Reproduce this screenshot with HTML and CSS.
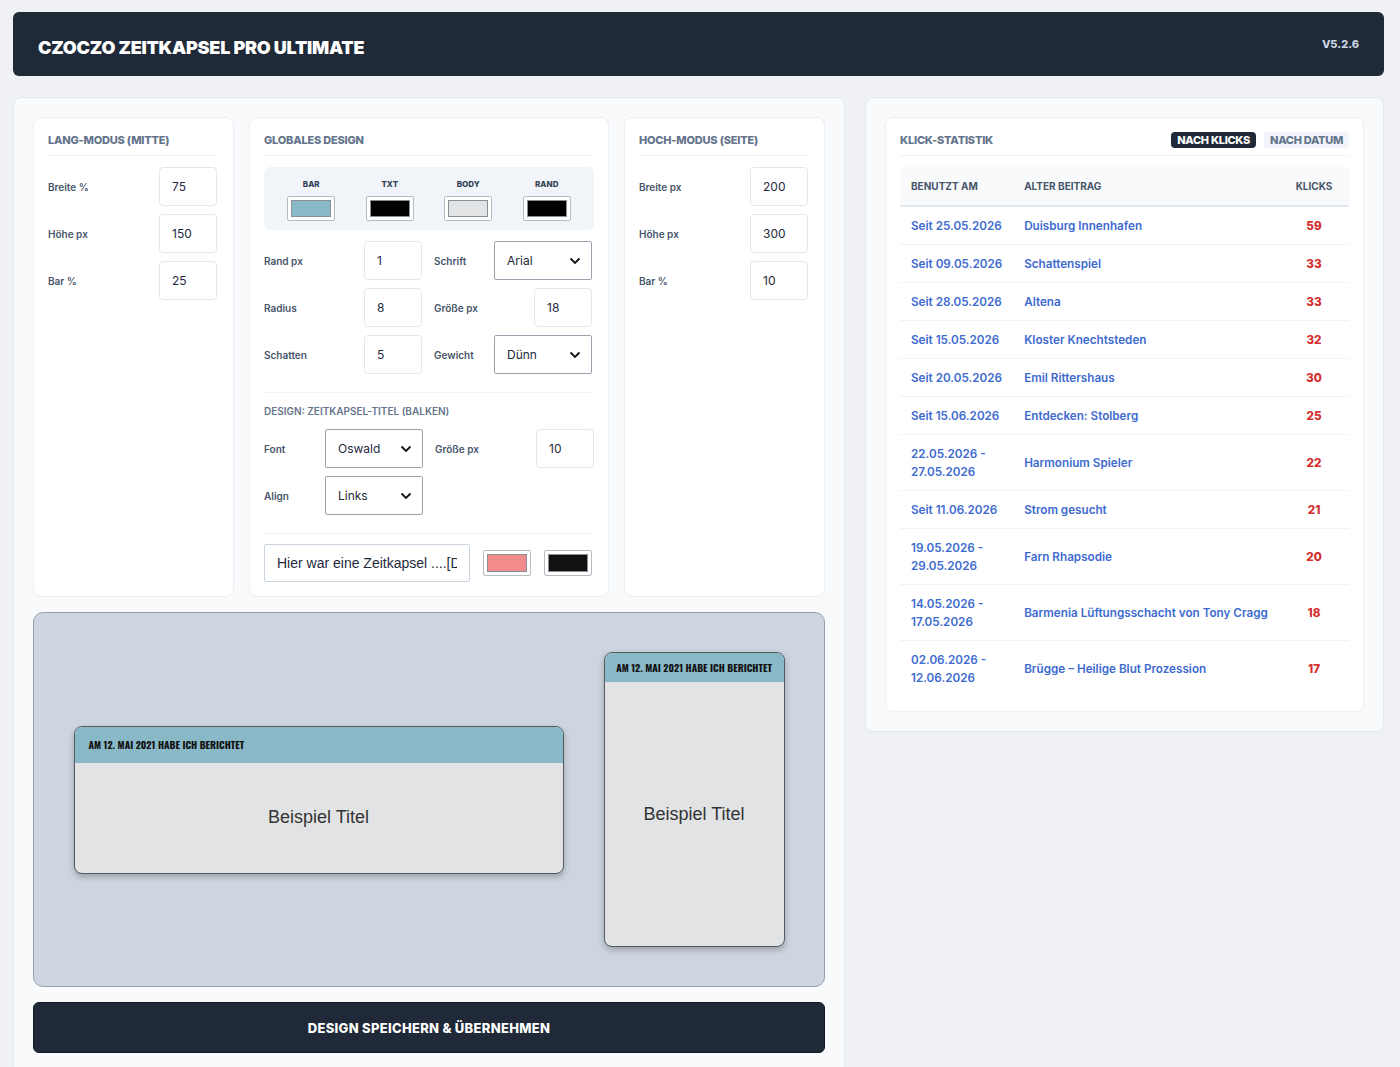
FILE: index.html
```html
<!DOCTYPE html>
<html lang="de">
<head>
<meta charset="UTF-8">
<title>Czoczo Zeitkapsel Pro Ultimate</title>
<link rel="stylesheet" href="styles.css">
</head>
<body>
<div class="page">
	<header class="topbar">
		<h1>CZOCZO ZEITKAPSEL PRO ULTIMATE</h1>
		<span class="version">V5.2.6</span>
	</header>

	<div class="main">
		<section class="panel left">
			<div class="cards">
				<div class="card small">
					<h2>LANG-MODUS (MITTE)</h2>
					<div class="row"><label>Breite %</label><input class="num" value="75"></div>
					<div class="row"><label>Höhe px</label><input class="num" value="150"></div>
					<div class="row"><label>Bar %</label><input class="num" value="25"></div>
				</div>

				<div class="card wide">
					<h2>GLOBALES DESIGN</h2>
					<div class="colors">
						<div class="color"><span>BAR</span><div class="swatch"><i class="c-bar"></i></div></div>
						<div class="color"><span>TXT</span><div class="swatch"><i class="c-black"></i></div></div>
						<div class="color"><span>BODY</span><div class="swatch"><i class="c-body"></i></div></div>
						<div class="color"><span>RAND</span><div class="swatch"><i class="c-black"></i></div></div>
					</div>
					<div class="grid g1">
						<label>Rand px</label><input class="num" value="1">
						<label class="l2">Schrift</label>
						<div class="select"><span>Arial</span><svg width="12" height="8" viewBox="0 0 12 8"><path d="M1.5 1.5 6 6l4.5-4.5" fill="none" stroke="#111" stroke-width="1.8"/></svg></div>
						<label>Radius</label><input class="num" value="8">
						<label class="l2">Größe px</label><input class="num right" value="18">
						<label>Schatten</label><input class="num" value="5">
						<label class="l2">Gewicht</label>
						<div class="select"><span>Dünn</span><svg width="12" height="8" viewBox="0 0 12 8"><path d="M1.5 1.5 6 6l4.5-4.5" fill="none" stroke="#111" stroke-width="1.8"/></svg></div>
					</div>
					<div class="sub">DESIGN: ZEITKAPSEL-TITEL (BALKEN)</div>
					<div class="grid g2">
						<label>Font</label>
						<div class="select"><span>Oswald</span><svg width="12" height="8" viewBox="0 0 12 8"><path d="M1.5 1.5 6 6l4.5-4.5" fill="none" stroke="#111" stroke-width="1.8"/></svg></div>
						<label class="l2">Größe px</label><input class="num right" value="10">
						<label>Align</label>
						<div class="select"><span>Links</span><svg width="12" height="8" viewBox="0 0 12 8"><path d="M1.5 1.5 6 6l4.5-4.5" fill="none" stroke="#111" stroke-width="1.8"/></svg></div>
					</div>
					<div class="capsule">
						<input class="text" value="Hier war eine Zeitkapsel ....[Datum]">
						<div class="swatch big"><i class="c-pink"></i></div>
						<div class="swatch big"><i class="c-dark"></i></div>
					</div>
				</div>

				<div class="card small">
					<h2>HOCH-MODUS (SEITE)</h2>
					<div class="row"><label>Breite px</label><input class="num" value="200"></div>
					<div class="row"><label>Höhe px</label><input class="num" value="300"></div>
					<div class="row"><label>Bar %</label><input class="num" value="10"></div>
				</div>
			</div>

			<div class="preview">
				<div class="capsule-box long">
					<div class="bar">AM 12. MAI 2021 HABE ICH BERICHTET</div>
					<div class="body">Beispiel Titel</div>
				</div>
				<div class="capsule-box tall">
					<div class="bar">AM 12. MAI 2021 HABE ICH BERICHTET</div>
					<div class="body">Beispiel Titel</div>
				</div>
			</div>

			<button class="save">DESIGN SPEICHERN &amp; ÜBERNEHMEN</button>
		</section>

		<section class="panel right">
			<div class="card stats">
				<div class="stats-head">
					<h2>KLICK-STATISTIK</h2>
					<div class="tabs">
						<span class="tab active">NACH KLICKS</span>
						<span class="tab">NACH DATUM</span>
					</div>
				</div>
				<table>
					<thead>
						<tr><th class="d">BENUTZT AM</th><th>ALTER BEITRAG</th><th class="k">KLICKS</th></tr>
					</thead>
					<tbody>
						<tr><td class="d">Seit 25.05.2026</td><td>Duisburg Innenhafen</td><td class="k">59</td></tr>
						<tr><td class="d">Seit 09.05.2026</td><td>Schattenspiel</td><td class="k">33</td></tr>
						<tr><td class="d">Seit 28.05.2026</td><td>Altena</td><td class="k">33</td></tr>
						<tr><td class="d">Seit 15.05.2026</td><td>Kloster Knechtsteden</td><td class="k">32</td></tr>
						<tr><td class="d">Seit 20.05.2026</td><td>Emil Rittershaus</td><td class="k">30</td></tr>
						<tr><td class="d">Seit 15.06.2026</td><td>Entdecken: Stolberg</td><td class="k">25</td></tr>
						<tr><td class="d">22.05.2026 -<br>27.05.2026</td><td>Harmonium Spieler</td><td class="k">22</td></tr>
						<tr><td class="d">Seit 11.06.2026</td><td>Strom gesucht</td><td class="k">21</td></tr>
						<tr><td class="d">19.05.2026 -<br>29.05.2026</td><td>Farn Rhapsodie</td><td class="k">20</td></tr>
						<tr><td class="d">14.05.2026 -<br>17.05.2026</td><td>Barmenia Lüftungsschacht von Tony Cragg</td><td class="k">18</td></tr>
						<tr><td class="d">02.06.2026 -<br>12.06.2026</td><td>Brügge – Heilige Blut Prozession</td><td class="k">17</td></tr>
					</tbody>
				</table>
			</div>
		</section>
	</div>
</div>
</body>
</html>
```

FILE: styles.css
```css
* {
	box-sizing: border-box;
}
body {
	margin: 0;
	background: #eff1f5;
	font-family: Inter, "Liberation Sans", sans-serif;
	color: #1e293b;
}
.page {
	padding: 12px 16px 0 13px;
}
.topbar {
	height: 64px;
	background: #1f2937;
	border-radius: 6px;
	display: flex;
	align-items: center;
	justify-content: space-between;
	padding: 0 25px;
}
.topbar h1 {
	margin: 0;
	padding-top: 6px;
	color: #fff;
	font-size: 18px;
	font-weight: 900;
	letter-spacing: -0.25px;
}
.version {
	color: #cbd5e1;
	font-size: 11px;
	font-weight: 800;
}
.main {
	display: flex;
	align-items: flex-start;
	gap: 20px;
	margin-top: 21px;
}
.panel {
	background: #f8fafc;
	border: 1px solid #e2e8f0;
	border-radius: 8px;
	padding: 19px;
}
.panel.left {
	width: 832px;
	padding-bottom: 30px;
}
.panel.right {
	flex: 1;
}
.cards {
	display: flex;
	gap: 15px;
	align-items: stretch;
}
.card {
	background: #fff;
	border: 1px solid #eceff3;
	border-radius: 8px;
	padding: 13px 16px 14px 14px;
}
.card.small {
	width: 201px;
}
.card.wide {
	width: 360px;
	padding-right: 14px;
}
.card h2 {
	margin: 0 0 11px;
	padding: 2px 0 8px;
	border-bottom: 1px solid #f1f4f7;
	font-size: 11px;
	font-weight: 800;
	color: #64748b;
	letter-spacing: -0.2px;
}
.row {
	display: flex;
	align-items: center;
	justify-content: space-between;
	margin-bottom: 8px;
}
label {
	font-size: 10px;
	font-weight: 600;
	color: #475569;
}
input {
	font-family: inherit;
	color: #1e293b;
	outline: none;
}
.num {
	width: 58px;
	height: 39px;
	border: 1px solid #e2e8f0;
	border-radius: 4px;
	padding: 0 12px;
	font-size: 12px;
}
.num.right {
	justify-self: end;
}
.colors {
	display: grid;
	grid-template-columns: repeat(4, 1fr);
	background: #f1f5f9;
	border-radius: 6px;
	padding: 12px 8px 9px;
	margin-bottom: 11px;
}
.color {
	display: flex;
	flex-direction: column;
	align-items: center;
	gap: 7px;
}
.color span {
	font-size: 8px;
	font-weight: 800;
	color: #334155;
}
.swatch {
	width: 48px;
	height: 25px;
	background: #fff;
	border: 1px solid #b8bcc2;
	border-radius: 2px;
	padding: 3px;
}
.swatch i {
	display: block;
	height: 100%;
	border: 1px solid #8a8f96;
}
.c-bar { background: #89b8c6; }
.c-black { background: #000; }
.c-body { background: #e2e3e5; }
.c-pink { background: #f28b8b; }
.c-dark { background: #111; }
.grid {
	display: grid;
	row-gap: 8px;
	align-items: center;
}
.g1 {
	grid-template-columns: 100px 58px 72px 98px;
	padding-bottom: 18px;
	border-bottom: 1px solid #eef1f5;
}
.g2 {
	grid-template-columns: 61px 98px 1fr 58px;
	padding-bottom: 18px;
	border-bottom: 1px solid #eef1f5;
}
.l2 {
	padding-left: 12px;
}
.select {
	height: 39px;
	border: 1px solid #9ca3af;
	border-radius: 2px;
	display: flex;
	align-items: center;
	justify-content: space-between;
	padding: 0 10px 0 12px;
	font-size: 12px;
	color: #1e293b;
}
.sub {
	font-size: 10px;
	font-weight: 600;
	color: #64748b;
	margin: 12px 0 12px;
}
.capsule {
	display: flex;
	align-items: center;
	gap: 13px;
	margin-top: 10px;
}
.text {
	width: 206px;
	height: 38px;
	border: 1px solid #cbd5e1;
	border-radius: 2px;
	padding: 0 12px;
	font-size: 14px;
	font-family: "Liberation Sans", Arial, sans-serif;
}
.swatch.big {
	width: 48px;
	height: 26px;
}
.preview {
	margin-top: 15px;
	height: 375px;
	background: #cdd5e0;
	border: 1px solid #97a1ae;
	border-radius: 10px;
	display: flex;
	align-items: center;
	justify-content: center;
	gap: 40px;
}
.capsule-box {
	background: #e2e3e5;
	border: 1px solid #555b63;
	border-radius: 8px;
	box-shadow: 0 3px 6px rgba(0, 0, 0, 0.25);
	overflow: hidden;
	display: flex;
	flex-direction: column;
}
.capsule-box.long {
	width: 490px;
	height: 148px;
}
.capsule-box.tall {
	width: 181px;
	height: 295px;
}
.bar {
	background: #89b8c6;
	font-family: Oswald, "Liberation Sans Narrow", "DejaVu Sans Condensed", sans-serif;
	font-stretch: condensed;
	font-size: 10px;
	font-weight: 700;
	color: #111;
	display: flex;
	align-items: center;
	white-space: nowrap;
}
.long .bar {
	height: 36px;
	padding-left: 14px;
}
.tall .bar {
	height: 29px;
	justify-content: center;
}
.body {
	flex: 1;
	display: flex;
	align-items: center;
	justify-content: center;
	font-family: "Liberation Sans", Arial, sans-serif;
	font-size: 18px;
	color: #333;
}
.save {
	display: block;
	width: 100%;
	height: 51px;
	margin-top: 15px;
	background: #1f2937;
	border: 1px solid #111827;
	border-radius: 6px;
	color: #fff;
	font-family: inherit;
	font-size: 13px;
	font-weight: 800;
	letter-spacing: 0.3px;
	padding-top: 2px;
}
.stats {
	padding: 13px 14px 15px;
}
.stats-head {
	display: flex;
	justify-content: space-between;
	align-items: flex-start;
	border-bottom: 1px solid #f1f4f7;
	margin-bottom: 11px;
}
.stats-head h2 {
	border: none;
	margin: 0;
}
.tabs {
	display: flex;
	gap: 8px;
	margin-top: 1px;
}
.tab {
	font-size: 11px;
	font-weight: 800;
	letter-spacing: -0.3px;
	padding: 1px 6px;
	border-radius: 4px;
	background: #f1f5f9;
	color: #64748b;
}
.tab.active {
	background: #1f2937;
	color: #fff;
}
table {
	width: 100%;
	border-collapse: collapse;
}
th {
	background: #f8fafc;
	text-align: left;
	font-size: 10px;
	font-weight: 700;
	color: #475569;
	padding: 10px 11px;
	line-height: 18px;
	border-bottom: 2px solid #e2e8f0;
}
td {
	font-size: 11.7px;
	font-weight: 600;
	color: #3d6bd0;
	padding: 9.5px 11px;
	line-height: 18px;
	border-bottom: 1px solid #f1f4f7;
}
tbody tr:last-child td {
	border-bottom: none;
}
.d {
	width: 111px;
	white-space: nowrap;
}
.k {
	width: 70px;
	text-align: center;
}
td.k {
	color: #d32f2f;
	font-weight: 800;
}
```
